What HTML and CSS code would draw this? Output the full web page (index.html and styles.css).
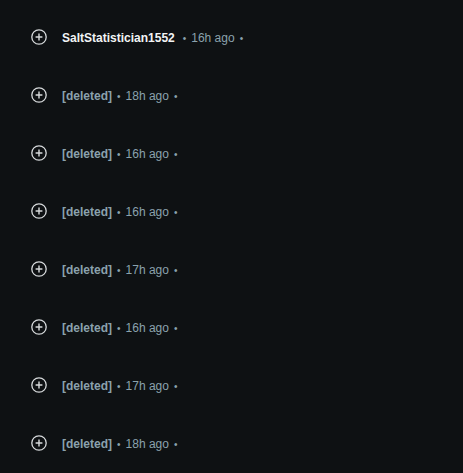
FILE: index.html
```html
<!DOCTYPE html>
<html lang="en">
<head>
	<meta charset="UTF-8">
	<title>Comments</title>
	<link rel="stylesheet" href="styles.css">
</head>
<body>
	<div class="list">
		<div class="row">
			<svg class="expand" width="16" height="16" viewBox="0 0 16 16"><circle cx="8" cy="8" r="7.2" fill="none" stroke="#d7dadc" stroke-width="1.3"/><path d="M8 4.6v6.8M4.6 8h6.8" stroke="#d7dadc" stroke-width="1.4"/></svg>
			<span class="author user">SaltStatistician1552</span>
			<span class="dot op">&bull;</span>
			<span class="time">16h ago</span>
			<span class="dot">&bull;</span>
		</div>
		<div class="row">
			<svg class="expand" width="16" height="16" viewBox="0 0 16 16"><circle cx="8" cy="8" r="7.2" fill="none" stroke="#d7dadc" stroke-width="1.3"/><path d="M8 4.6v6.8M4.6 8h6.8" stroke="#d7dadc" stroke-width="1.4"/></svg>
			<span class="author">[deleted]</span>
			<span class="dot">&bull;</span>
			<span class="time">18h ago</span>
			<span class="dot">&bull;</span>
		</div>
		<div class="row">
			<svg class="expand" width="16" height="16" viewBox="0 0 16 16"><circle cx="8" cy="8" r="7.2" fill="none" stroke="#d7dadc" stroke-width="1.3"/><path d="M8 4.6v6.8M4.6 8h6.8" stroke="#d7dadc" stroke-width="1.4"/></svg>
			<span class="author">[deleted]</span>
			<span class="dot">&bull;</span>
			<span class="time">16h ago</span>
			<span class="dot">&bull;</span>
		</div>
		<div class="row">
			<svg class="expand" width="16" height="16" viewBox="0 0 16 16"><circle cx="8" cy="8" r="7.2" fill="none" stroke="#d7dadc" stroke-width="1.3"/><path d="M8 4.6v6.8M4.6 8h6.8" stroke="#d7dadc" stroke-width="1.4"/></svg>
			<span class="author">[deleted]</span>
			<span class="dot">&bull;</span>
			<span class="time">16h ago</span>
			<span class="dot">&bull;</span>
		</div>
		<div class="row">
			<svg class="expand" width="16" height="16" viewBox="0 0 16 16"><circle cx="8" cy="8" r="7.2" fill="none" stroke="#d7dadc" stroke-width="1.3"/><path d="M8 4.6v6.8M4.6 8h6.8" stroke="#d7dadc" stroke-width="1.4"/></svg>
			<span class="author">[deleted]</span>
			<span class="dot">&bull;</span>
			<span class="time">17h ago</span>
			<span class="dot">&bull;</span>
		</div>
		<div class="row">
			<svg class="expand" width="16" height="16" viewBox="0 0 16 16"><circle cx="8" cy="8" r="7.2" fill="none" stroke="#d7dadc" stroke-width="1.3"/><path d="M8 4.6v6.8M4.6 8h6.8" stroke="#d7dadc" stroke-width="1.4"/></svg>
			<span class="author">[deleted]</span>
			<span class="dot">&bull;</span>
			<span class="time">16h ago</span>
			<span class="dot">&bull;</span>
		</div>
		<div class="row">
			<svg class="expand" width="16" height="16" viewBox="0 0 16 16"><circle cx="8" cy="8" r="7.2" fill="none" stroke="#d7dadc" stroke-width="1.3"/><path d="M8 4.6v6.8M4.6 8h6.8" stroke="#d7dadc" stroke-width="1.4"/></svg>
			<span class="author">[deleted]</span>
			<span class="dot">&bull;</span>
			<span class="time">17h ago</span>
			<span class="dot">&bull;</span>
		</div>
		<div class="row">
			<svg class="expand" width="16" height="16" viewBox="0 0 16 16"><circle cx="8" cy="8" r="7.2" fill="none" stroke="#d7dadc" stroke-width="1.3"/><path d="M8 4.6v6.8M4.6 8h6.8" stroke="#d7dadc" stroke-width="1.4"/></svg>
			<span class="author">[deleted]</span>
			<span class="dot">&bull;</span>
			<span class="time">18h ago</span>
			<span class="dot">&bull;</span>
		</div>
	</div>
</body>
</html>
```

FILE: styles.css
```css
html, body { margin: 0; background: #0e1113; }
body { font-family: "Liberation Sans", Arial, sans-serif; font-size: 12px; color: #8ba2ad; }
.list { padding-top: 8px; }
.row { height: 58px; display: flex; align-items: center; padding-left: 31px; }
.row span { padding-top: 2px; }
.expand { flex: none; margin-right: 15px; }
.author { font-weight: bold; color: #8ba2ad; }
.author.user { color: #f2f4f5; }
.dot { font-size: 10px; margin: 0 5px; }
.dot.op { margin-left: 8px; }
```
